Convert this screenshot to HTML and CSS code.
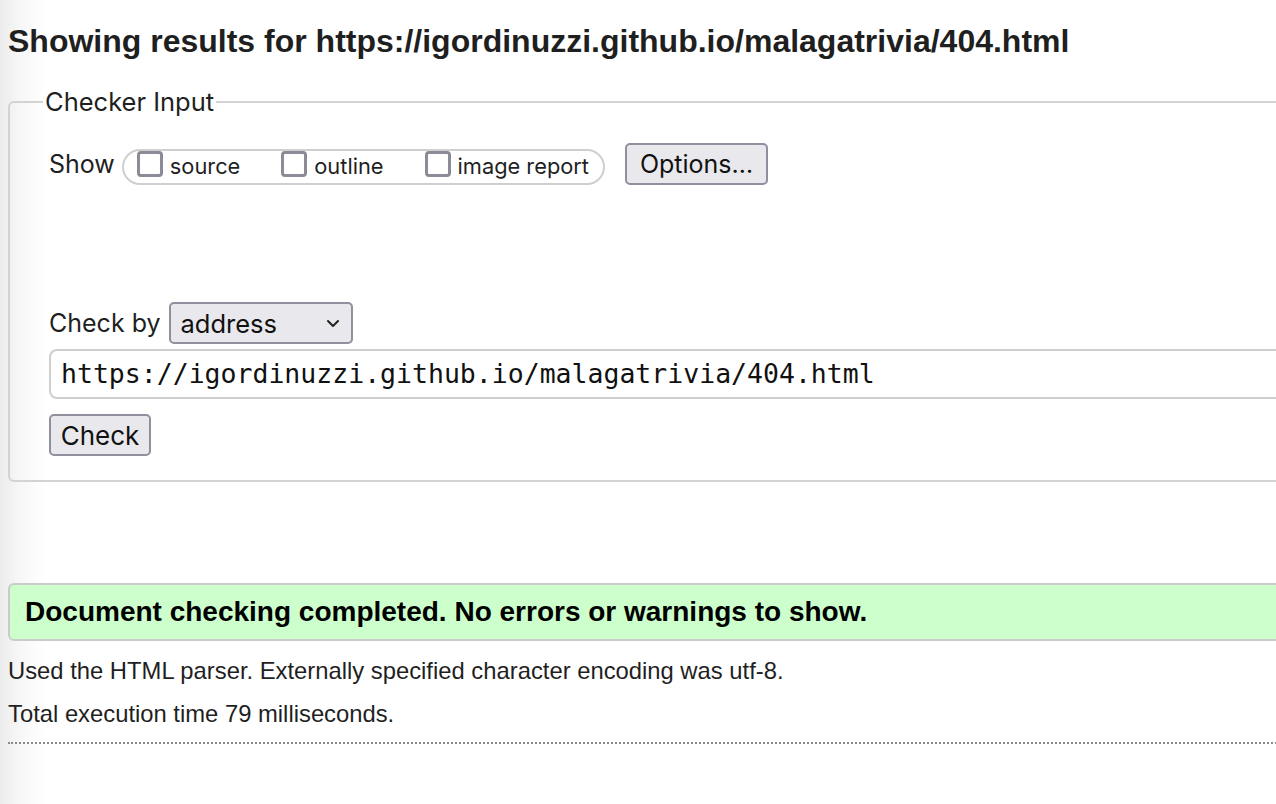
FILE: index.html
```html
<!DOCTYPE html>
<html lang="en">
<head>
<meta charset="utf-8">
<title>Showing results for https://igordinuzzi.github.io/malagatrivia/404.html</title>
<link rel="stylesheet" href="styles.css">
</head>
<body>
<h2 class="title">Showing results for https://igordinuzzi.github.io/malagatrivia/404.html</h2>
<form class="checker">
  <fieldset class="panel">
    <legend class="panel-legend">Checker Input</legend>
    <div class="show-row">
      <span class="label">Show</span>
      <div class="pill">
        <label class="opt"><input class="box" type="checkbox"><span>source</span></label>
        <label class="opt"><input class="box" type="checkbox"><span>outline</span></label>
        <label class="opt"><input class="box" type="checkbox"><span>image report</span></label>
      </div>
      <button type="button" class="btn btn-options">Options…</button>
    </div>
    <div class="by-row">
      <span class="label">Check by</span>
      <div class="select">
        <span>address</span>
        <svg class="chev" width="14" height="9" viewBox="0 0 14 9"><path d="M2 2 L7 7 L12 2" fill="none" stroke="#222" stroke-width="2" stroke-linecap="round" stroke-linejoin="round"/></svg>
      </div>
    </div>
    <div class="url">https://igordinuzzi.github.io/malagatrivia/404.html</div>
    <button type="button" class="btn btn-check">Check</button>
  </fieldset>
</form>
<div class="success">Document checking completed. No errors or warnings to show.</div>
<p class="note">Used the HTML parser. Externally specified character encoding was utf-8.</p>
<p class="note">Total execution time 79 milliseconds.</p>
<hr class="dots">
</body>
</html>
```
FILE: styles.css
```css
html, body {
  overflow: hidden;
}
body {
  margin: 0;
  padding: 0 0 0 8px;
  width: 1500px;
  height: 804px;
  background: linear-gradient(to right, #ececec 0, #f7f7f7 20px, #ffffff 45px);
  font-family: "Liberation Sans", Arial, sans-serif;
  color: #1a1a1a;
}
.title {
  margin: 22px 0 0 0;
  font-size: 32px;
  line-height: 38px;
  font-weight: bold;
  color: #1f1f1f;
}
.checker {
  margin: 30px 0 0 0;
}
.panel {
  margin: 0;
  width: 1400px;
  border: 2px solid #d3d3d3;
  border-radius: 6px;
  padding: 29px 0 24px 39px;
  box-sizing: border-box;
}
.panel-legend {
  margin-left: -6px;
  padding: 0 2px;
  font-family: Inter, "Liberation Sans", sans-serif;
  font-size: 25.5px;
  line-height: 24px;
  color: #1f1f1f;
}
.label {
  font-family: Inter, "Liberation Sans", sans-serif;
  font-size: 25px;
  color: #1f1f1f;
}
.show-row {
  display: flex;
  align-items: center;
  height: 42px;
}
.show-row .label {
  margin-right: 7px;
}
.pill {
  display: flex;
  align-items: flex-start;
  gap: 41px;
  height: 36px;
  box-sizing: border-box;
  margin-top: 6px;
  border: 2px solid #cfcfcf;
  border-radius: 18px;
  padding: 0 14px 0 13px;
}
.opt {
  display: flex;
  align-items: flex-start;
  gap: 7px;
  font-family: Inter, "Liberation Sans", sans-serif;
  font-size: 21.8px;
  color: #1f1f1f;
}
.opt span {
  line-height: 31px;
}
.box {
  appearance: none;
  -webkit-appearance: none;
  margin: 0;
  width: 26px;
  height: 26px;
  border: 3px solid #8c8b98;
  border-radius: 4px;
  background: #fff;
  box-sizing: border-box;
}
.btn {
  font-family: Inter, "Liberation Sans", sans-serif;
  background: #e9e9ed;
  border: 2px solid #8f8f9d;
  border-radius: 5px;
  color: #111;
  font-size: 25px;
  height: 42px;
  box-sizing: border-box;
  padding: 0;
}
.btn-options {
  margin-left: 20px;
  width: 143px;
}
.by-row {
  display: flex;
  align-items: center;
  margin-top: 117px;
  height: 42px;
}
.by-row .label {
  margin-right: 8px;
}
.select {
  display: flex;
  align-items: center;
  justify-content: space-between;
  width: 184px;
  height: 42px;
  box-sizing: border-box;
  padding: 0 11px 0 10px;
  background: #e9e9ed;
  border: 2px solid #8f8f9d;
  border-radius: 5px;
  font-family: Inter, "Liberation Sans", sans-serif;
  font-size: 25.5px;
  color: #111;
}
.url {
  margin-top: 5px;
  height: 50px;
  box-sizing: border-box;
  border: 2px solid #cfcfcf;
  border-right: none;
  border-radius: 8px 0 0 8px;
  padding-left: 10px;
  font-family: "DejaVu Sans Mono", "Liberation Mono", monospace;
  font-size: 26.5px;
  line-height: 46px;
  color: #111;
}
.btn-check {
  margin-top: 15px;
  width: 102px;
  display: block;
  font-size: 26px;
}
.success {
  margin-top: 101px;
  width: 1400px;
  height: 58px;
  box-sizing: border-box;
  background: #ccffcc;
  border: 2px solid #c8cbc8;
  border-radius: 6px;
  padding-left: 15px;
  font-size: 28px;
  font-weight: bold;
  line-height: 54px;
  color: #000;
}
.note {
  margin: 0;
  font-size: 23.8px;
  line-height: 43px;
  color: #1f1f1f;
}
.note:first-of-type {
  margin-top: 8px;
}
.dots {
  margin: 7px 0 0 0;
  border: none;
  border-top: 2px dotted #8a8a8a;
  height: 0;
  width: 1400px;
}
```
